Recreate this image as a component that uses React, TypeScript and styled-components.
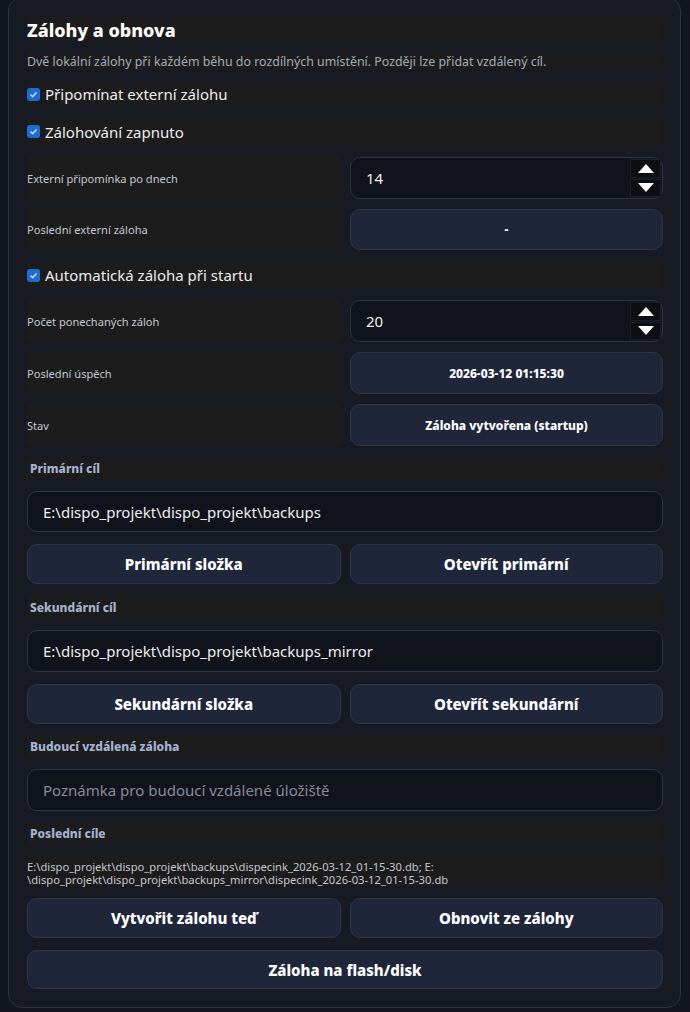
import React from "react";
import styled, { createGlobalStyle } from "styled-components";

const GlobalStyle = createGlobalStyle`
  html, body { margin: 0; padding: 0; background: #13161e; }
  body { font-family: "Noto Sans", "Open Sans", sans-serif; color: #e8e8e8; }
  * { box-sizing: border-box; }
`;

const Page = styled.div`
  width: 690px;
  height: 1012px;
  overflow: hidden;
  padding: 0 9px 0 8px;
`;

const Card = styled.section`
  margin-top: -3px;
  background: #171a22;
  border: 1px solid #2c3344;
  border-radius: 14px;
  padding: 19px 17px 18px 18px;
  display: flex;
  flex-direction: column;
  gap: 12px;
`;

const Box = styled.div`
  background: #1c1c1c;
  display: flex;
  align-items: center;
`;

const Title = styled(Box)`
  height: 24px;
  padding-top: 2px;
  font-size: 18px;
  font-weight: 800;
  color: #ffffff;
`;

const Desc = styled(Box)`
  height: 17px;
  font-size: 12.4px;
  color: #a3abbb;
`;

const CheckRow = styled(Box)<{ $h: number }>`
  height: ${(p) => p.$h}px;
  gap: 5px;
  font-size: 15px;
  color: #ececec;
`;

const CheckMark = styled.span`
  width: 13px;
  height: 13px;
  border-radius: 3px;
  background: #1c6cd2;
  display: flex;
  align-items: center;
  justify-content: center;
  flex: none;
`;

const FormGrid = styled.div`
  display: grid;
  grid-template-columns: 1fr 1fr;
  column-gap: 10px;
  row-gap: 10px;
`;

const FieldLabel = styled(Box)<{ $h: number }>`
  height: ${(p) => p.$h}px;
  font-size: 11.1px;
  color: #c4c7cf;
`;

const InputShell = styled.div<{ $h: number }>`
  height: ${(p) => p.$h}px;
  background: #10131c;
  border: 1px solid #2c3448;
  border-radius: 10px;
  display: flex;
  align-items: center;
  padding-left: 15px;
  font-size: 15px;
  color: #eeeeee;
  position: relative;
`;

const Placeholder = styled.span`
  color: #868b96;
`;

const SpinButtons = styled.div`
  position: absolute;
  right: 1px;
  top: 1px;
  bottom: 1px;
  width: 31px;
  display: flex;
  flex-direction: column;
  gap: 1px;
`;

const SpinButton = styled.div`
  flex: 1;
  background: #0c0e14;
  border: 1px solid #1a1e28;
  display: flex;
  align-items: center;
  justify-content: center;
`;

const ValueButton = styled.div<{ $h: number }>`
  height: ${(p) => p.$h}px;
  background: #20263a;
  border: 1px solid #2d354c;
  border-radius: 10px;
  display: flex;
  align-items: center;
  justify-content: center;
  font-size: 12px;
  font-weight: 800;
  color: #ffffff;
`;

const SectionLabel = styled(Box)<{ $h: number }>`
  height: ${(p) => p.$h}px;
  padding-left: 3px;
  font-size: 12px;
  font-weight: 800;
  color: #a4b3d3;
`;

const ButtonRow = styled.div`
  display: grid;
  grid-template-columns: 1fr 1fr;
  column-gap: 9px;
`;

const ActionButton = styled.button<{ $h: number }>`
  height: ${(p) => p.$h}px;
  background: #20263a;
  border: 1px solid #2d354c;
  border-radius: 10px;
  font-family: inherit;
  font-size: 15px;
  font-weight: 800;
  color: #ffffff;
  padding: 0;
`;

const Paths = styled.div`
  height: 31px;
  background: #1c1c1c;
  font-size: 11.2px;
  line-height: 13px;
  color: #c4c7cf;
  padding-top: 5px;
  white-space: nowrap;
`;

const Check = ({ children, h }: { children: React.ReactNode; h: number }) => (
  <CheckRow $h={h}>
    <CheckMark>
      <svg width="9" height="9" viewBox="0 0 9 9">
        <path d="M1.5 4.6 L3.6 6.6 L7.6 2.4" fill="none" stroke="#ffffff" strokeWidth="1.2" />
      </svg>
    </CheckMark>
    {children}
  </CheckRow>
);

const Spin = ({ value, h }: { value: string; h: number }) => (
  <InputShell $h={h}>
    {value}
    <SpinButtons>
      <SpinButton>
        <svg width="16" height="9" viewBox="0 0 16 9">
          <path d="M0 9 L8 0 L16 9 Z" fill="#ffffff" />
        </svg>
      </SpinButton>
      <SpinButton>
        <svg width="16" height="9" viewBox="0 0 16 9">
          <path d="M0 0 L16 0 L8 9 Z" fill="#ffffff" />
        </svg>
      </SpinButton>
    </SpinButtons>
  </InputShell>
);

export default function App() {
  return (
    <Page>
      <GlobalStyle />
      <Card>
        <Title>Zálohy a obnova</Title>
        <Desc>Dvě lokální zálohy při každém běhu do rozdílných umístění. Později lze přidat vzdálený cíl.</Desc>
        <Check h={24}>Připomínat externí zálohu</Check>
        <Check h={27}>Zálohování zapnuto</Check>
        <FormGrid>
          <FieldLabel $h={42}>Externí připomínka po dnech</FieldLabel>
          <Spin value="14" h={42} />
          <FieldLabel $h={41}>Poslední externí záloha</FieldLabel>
          <ValueButton $h={41}>-</ValueButton>
        </FormGrid>
        <Check h={26}>Automatická záloha při startu</Check>
        <FormGrid>
          <FieldLabel $h={42}>Počet ponechaných záloh</FieldLabel>
          <Spin value="20" h={42} />
          <FieldLabel $h={42}>Poslední úspěch</FieldLabel>
          <ValueButton $h={42}>2026-03-12 01:15:30</ValueButton>
          <FieldLabel $h={42}>Stav</FieldLabel>
          <ValueButton $h={42}>Záloha vytvořena (startup)</ValueButton>
        </FormGrid>
        <SectionLabel $h={21}>Primární cíl</SectionLabel>
        <InputShell $h={41}>E:\dispo_projekt\dispo_projekt\backups</InputShell>
        <ButtonRow>
          <ActionButton $h={40}>Primární složka</ActionButton>
          <ActionButton $h={40}>Otevřít primární</ActionButton>
        </ButtonRow>
        <SectionLabel $h={22}>Sekundární cíl</SectionLabel>
        <InputShell $h={42}>E:\dispo_projekt\dispo_projekt\backups_mirror</InputShell>
        <ButtonRow>
          <ActionButton $h={40}>Sekundární složka</ActionButton>
          <ActionButton $h={40}>Otevřít sekundární</ActionButton>
        </ButtonRow>
        <SectionLabel $h={21}>Budoucí vzdálená záloha</SectionLabel>
        <InputShell $h={42}>
          <Placeholder>Poznámka pro budoucí vzdálené úložiště</Placeholder>
        </InputShell>
        <SectionLabel $h={20}>Poslední cíle</SectionLabel>
        <Paths>
          E:\dispo_projekt\dispo_projekt\backups\dispecink_2026-03-12_01-15-30.db; E:
          <br />
          \dispo_projekt\dispo_projekt\backups_mirror\dispecink_2026-03-12_01-15-30.db
        </Paths>
        <ButtonRow>
          <ActionButton $h={40}>Vytvořit zálohu teď</ActionButton>
          <ActionButton $h={40}>Obnovit ze zálohy</ActionButton>
        </ButtonRow>
        <ActionButton $h={39}>Záloha na flash/disk</ActionButton>
      </Card>
    </Page>
  );
}
